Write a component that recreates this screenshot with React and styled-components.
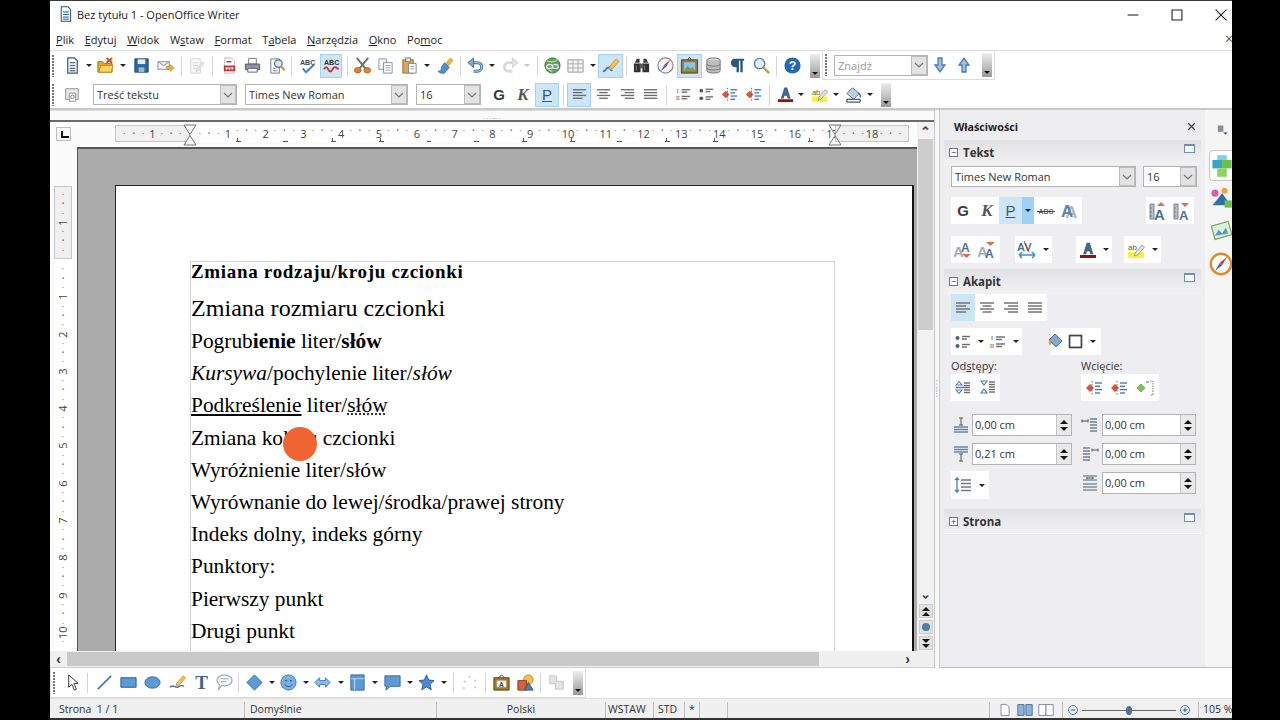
import React from 'react';
import styled, {createGlobalStyle} from 'styled-components';

const GlobalStyle = createGlobalStyle`
    html, body {
        margin: 0;
        padding: 0;
        background: #000;
    }
    * {
        box-sizing: border-box;
    }
`;

const uiFont = '"Open Sans", "Noto Sans", "Liberation Sans", sans-serif';

const lines = (rows, color = '#6b6b6b', w = 1.4) => rows.map(([x1, y, x2], i) => (
    <line key={i} x1={x1} y1={y} x2={x2} y2={y} stroke={color} strokeWidth={w} />
));

const ICONS = {
    doc: <><path d="M5 2h7l3 3v13H5z" fill="#fff" stroke="#40566e" strokeWidth="1.3" />{lines([[7, 7, 13], [7, 10, 13], [7, 13, 13], [7, 15.5, 13]], '#5c6f84')}</>,
    open: <><path d="M2 6h5l2 2h8v9H2z" fill="#e8a628" stroke="#a9741a" /><path d="M3 17l2-7h13l-2 7z" fill="#fbd168" stroke="#c08b22" /><path d="M11 2l6 5M17 2l-6 5" stroke="#d8482e" strokeWidth="2" /></>,
    save: <><path d="M3 3h14v14H3z" fill="#2d6aa3" stroke="#1c4468" /><path d="M6 3.5h8v5H6z" fill="#e9eef4" /><path d="M7 12h6v5H7z" fill="#9fb8d2" /></>,
    mail: <><path d="M2 6h12v8H2z" fill="#f3f3f3" stroke="#8b8f96" /><path d="M2 6l6 4 6-4" fill="none" stroke="#8b8f96" /><path d="M11 11h4V9l4 3.5-4 3.5v-2h-4z" fill="#eeb43c" stroke="#b07e1e" strokeWidth=".6" /></>,
    edit: <><path d="M4 3h10v15H4z" fill="#fbfbfb" stroke="#d3d3d3" />{lines([[6, 7, 12], [6, 10, 12], [6, 13, 11]], '#dadada')}<path d="M10 14l6-8 2 1.5-6 8-2.5 1z" fill="#e6e6e6" stroke="#cdcdcd" strokeWidth=".7" /></>,
    pdf: <><path d="M5 2h7l3 3v13H5z" fill="#fff" stroke="#b9b9b9" /><path d="M4 10h12v6H4z" fill="#c4342f" />{lines([[6, 13, 8], [9, 13, 11], [12, 13, 14]], '#fff', 2.4)}{lines([[7, 6, 12]], '#c4342f', 1.6)}</>,
    print: <><path d="M6 2.5h8v6H6z" fill="#fff" stroke="#70757c" /><path d="M2.5 8.5h15v6h-15z" fill="#8f949b" stroke="#54585e" /><path d="M5 13h10v4H5z" fill="#f4f4f4" stroke="#63676d" /></>,
    preview: <><path d="M4 3h9v15H4z" fill="#fff" stroke="#6f7a87" />{lines([[6, 13, 9], [6, 15.5, 11]], '#9aa3ad')}<circle cx="12" cy="8" r="4" fill="#d6e8f6" stroke="#53708c" strokeWidth="1.3" /><path d="M15 11l3.5 4" stroke="#c79a2c" strokeWidth="2.2" /></>,
    spell: <><text x="2" y="9" fontFamily="Liberation Sans" fontWeight="700" fontSize="7.5" fill="#444">ABC</text><path d="M5 13l3.5 4L17 9" fill="none" stroke="#3c87c9" strokeWidth="2.2" /></>,
    autospell: <><text x="2" y="9" fontFamily="Liberation Sans" fontWeight="700" fontSize="7.5" fill="#333">ABC</text><path d="M2 14c2-3 3-3 4.500 0s3 3 4.500 0 3-3 6.500 0" fill="none" stroke="#c9302a" strokeWidth="2" /></>,
    cut: <><path d="M4 2l9 11M16 2L7 13" stroke="#6f6f6f" strokeWidth="2" /><ellipse cx="5" cy="15" rx="3.500" ry="2.800" fill="#dd8432" stroke="#b9651c" /><ellipse cx="15" cy="15" rx="3.500" ry="2.800" fill="#dd8432" stroke="#b9651c" /></>,
    copy: <><path d="M3 3h8v11H3z" fill="#f2f5f9" stroke="#8b99aa" /><path d="M8 7h9v11H8z" fill="#fff" stroke="#7d8da0" />{lines([[10, 10, 15], [10, 12.5, 15], [10, 15, 15]], '#93a3b4', 1)}</>,
    paste: <><path d="M3 4h11v14H3z" fill="#dba94e" stroke="#97702a" /><path d="M6 2h5v4H6z" fill="#eee" stroke="#777" /><path d="M9 8h8v10H9z" fill="#fff" stroke="#75879b" />{lines([[11, 11, 15], [11, 13.5, 15]], '#8b9aa9', 1)}</>,
    brush: <><path d="M10 8l5-6 3 2.500-5 6z" fill="#f1b731" stroke="#b5841a" strokeWidth=".6" /><path d="M9 7l5 5-5 6c-2 1-5 0-7-2 3 0 4-2 4-5z" fill="#4a8fd2" stroke="#2c639c" strokeWidth=".7" /></>,
    undo: <><path d="M6 7h6a4 4 0 010 9H8" fill="none" stroke="#3f6f9f" strokeWidth="3.200" /><path d="M6 7h6a4 4 0 010 9H8" fill="none" stroke="#a6c6e4" strokeWidth="1.400" /><path d="M8 2L2 7l6 5z" fill="#7fa9d0" stroke="#3f6f9f" /></>,
    redo: <><path d="M14 7H8a4 4 0 000 9h4" fill="none" stroke="#d8d8d8" strokeWidth="3" /><path d="M12 2l6 5-6 5z" fill="#e6e6e6" stroke="#cfcfcf" /></>,
    globe: <><circle cx="10" cy="10" r="8" fill="#62a35b" stroke="#3f6f42" /><path d="M4 5c3 2 8 1 11-1M3 13c3-1 4 3 7 4" fill="none" stroke="#a8d49d" strokeWidth="1.500" /><rect x="4" y="9" width="6" height="4" rx="2" fill="none" stroke="#e9eef5" strokeWidth="1.300" /><rect x="10" y="9" width="6" height="4" rx="2" fill="none" stroke="#e9eef5" strokeWidth="1.300" /></>,
    table: <><path d="M2 4h16v13H2z" fill="#f3f3f3" stroke="#9b9b9b" /><path d="M2 8.300h16M2 12.600h16M7.300 4v13M12.600 4v13" stroke="#aaa" /></>,
    draw: <><path d="M2 16c3 1 3-4 6-4s1 4 4 3" fill="none" stroke="#3a78bd" strokeWidth="1.800" /><path d="M9 11l7-8 3 2.500-7 8-3.500 1z" fill="#f1c34e" stroke="#b48a22" strokeWidth=".7" /></>,
    find: <><path d="M3 7l2-4h3v4zM12 3h3l2 4h-5z" fill="#3b3b3b" /><path d="M2 8h7v9H2zM11 8h7v9h-7z" fill="#2f2f2f" /><path d="M8 8h4v5H8z" fill="#5c5c5c" /><path d="M4 10h1v5H4zM13 10h1v5h-1z" fill="#888" /></>,
    nav: <><circle cx="10" cy="10" r="8" fill="#f4f4f4" stroke="#8a8a8a" strokeWidth="1.300" /><path d="M15 4l-4 7-2-2z" fill="#cf3a33" /><path d="M5 16l4-7 2 2z" fill="#3b6fb0" /></>,
    gallery: <><path d="M1.500 4h17v14h-17z" fill="#a5762e" stroke="#5e3f12" /><path d="M4 6.500h12v9H4z" fill="#8ec2e8" /><path d="M4 15.500l4-5 3 3 2-2 3 4z" fill="#6e9e45" /><path d="M8 4l2-2.500L12 4" fill="none" stroke="#5e3f12" /></>,
    db: <><ellipse cx="10" cy="4.500" rx="7" ry="2.500" fill="#d6d6d6" stroke="#777" /><path d="M3 4.500v11c0 3.300 14 3.300 14 0v-11" fill="#bdbdbd" stroke="#777" /><path d="M3 8.500c0 3 14 3 14 0M3 12.500c0 3 14 3 14 0" fill="none" stroke="#777" /></>,
    pilcrow: <><path d="M6 3h11v2h-1.500v12h-2.500V5h-1.500v12H9v-5.500A4.300 4.300 0 016 3z" fill="#2a577f" /></>,
    zoom: <><circle cx="8" cy="8" r="5.500" fill="#deeefa" stroke="#62809c" strokeWidth="1.500" /><path d="M12 12l6 6" stroke="#c9a02f" strokeWidth="2.600" /></>,
    help: <><circle cx="10" cy="10" r="8.500" fill="#2467b6" /><text x="10" y="15" textAnchor="middle" fontFamily="Liberation Sans" fontWeight="700" fontSize="13" fill="#fff">?</text></>,
    down: <path d="M8 3h4v7h3l-5 7-5-7h3z" fill="#9cc1e2" stroke="#4b7dab" strokeWidth="1.300" />,
    up: <path d="M8 17h4v-7h3l-5-7-5 7h3z" fill="#9cc1e2" stroke="#4b7dab" strokeWidth="1.300" />,
    styles: <><path d="M3 3h14v12H3z" fill="#e7e7e7" stroke="#8f8f8f" /><path d="M7 8h7v9H7z" fill="#fff" stroke="#8f8f8f" /><circle cx="10.500" cy="12" r="2" fill="none" stroke="#6f6f6f" /></>,
    alignL: lines([[3, 5, 17], [3, 8, 13], [3, 11, 17], [3, 14, 13]]),
    alignC: lines([[3, 5, 17], [5.500, 8, 14.500], [3, 11, 17], [5.500, 14, 14.500]]),
    alignR: lines([[3, 5, 17], [7, 8, 17], [3, 11, 17], [7, 14, 17]]),
    alignJ: <>{lines([[3, 5, 17], [3, 8, 17], [3, 11, 17], [3, 14, 17]])}</>,
    numList: <><text x="3" y="8" fontFamily="Liberation Serif" fontSize="6" fill="#444">I</text><text x="2" y="16" fontFamily="Liberation Serif" fontSize="6" fill="#444">II</text>{lines([[8, 5, 17], [8, 7.500, 14], [8, 12, 17], [8, 14.500, 14]])}</>,
    bullets: <><circle cx="4.500" cy="6" r="2" fill="#4d5c6b" /><circle cx="4.500" cy="14" r="2" fill="#4d5c6b" />{lines([[9, 4.500, 17], [9, 7, 14], [9, 12.500, 17], [9, 15, 14]])}</>,
    indentL: <><path d="M2 10l4-4 4 4-4 4z" fill="#d9533d" /><path d="M8 3v14" stroke="#666" strokeDasharray="1.500 1.500" />{lines([[11, 5, 18], [11, 8.300, 16], [11, 11.600, 18], [11, 15, 16]], '#3f7fb5')}</>,
    indentG: <><path d="M2 10l4-4 4 4-4 4z" fill="#7bc257" stroke="#4f9030" strokeWidth=".6" />{lines([[11, 4, 14]], '#888')}<path d="M15 3h3v14h-3" fill="none" stroke="#777" strokeDasharray="1.500 1" /></>,
    fontColor: <><path d="M5.500 14L9 3h2.500L15 14h-2.500l-.8-3H8.700l-.8 3z" fill="#3e6b94" stroke="#27445f" strokeWidth=".5" /><path d="M2 15h16v3H2z" fill="#8f1010" /></>,
    highlight: <><path d="M2 12h16v6H2z" fill="#fff23a" /><text x="2" y="10" fontFamily="Liberation Sans" fontSize="8" fill="#6a5a1c">ab</text><path d="M9 13l7-8 2.500 2-7 8-3 1z" fill="#e6e6e6" stroke="#7d7d7d" strokeWidth=".7" /></>,
    paint: <><path d="M3 9l6-6 7 6-6 6z" fill="#b9d0e6" stroke="#5a6f85" /><path d="M3 15h14v3H3z" fill="#fff" stroke="#222" /><path d="M15 8c2 2 3 3 2 5" fill="none" stroke="#6f6f6f" strokeWidth="1.500" /></>,
    strike: <><text x="10" y="13" textAnchor="middle" fontFamily="Liberation Sans" fontWeight="700" fontSize="7" fill="#666">ABC</text><path d="M1 10.500h18" stroke="#444" /></>,
    shadow: <><text x="5" y="17" fontFamily="Liberation Sans" fontWeight="700" fontSize="17" fill="#a9b6c4">A</text><text x="1" y="16" fontFamily="Liberation Sans" fontWeight="700" fontSize="17" fill="#5f82a5">A</text></>,
    grow: <><path d="M2 3h4v15H2zM2 7h2M2 11h2M2 15h2" fill="#b7c2cc" stroke="#5f6d7a" strokeWidth=".8" /><text x="6" y="18.500" fontFamily="Liberation Sans" fontWeight="700" fontSize="15" fill="#4a7299">A</text><path d="M9 5l4-4 4 4z" fill="#dc7148" /></>,
    shrink: <><path d="M2 3h4v15H2zM2 7h2M2 11h2M2 15h2" fill="#b7c2cc" stroke="#5f6d7a" strokeWidth=".8" /><text x="7" y="18.500" fontFamily="Liberation Sans" fontWeight="700" fontSize="13" fill="#4a7299">A</text><path d="M9 2l4 4 4-4z" fill="#dc7148" /></>,
    above: <><text x="-1" y="17" fontFamily="Liberation Sans" fontWeight="700" fontSize="15" fill="#a5adb6">A</text><text x="7" y="12" fontFamily="Liberation Sans" fontWeight="700" fontSize="12" fill="#4a7299">A</text><path d="M8 14h9l-4.500 4z" fill="#dc7148" /></>,
    below: <><text x="-1" y="17" fontFamily="Liberation Sans" fontWeight="700" fontSize="15" fill="#a5adb6">A</text><text x="7" y="18" fontFamily="Liberation Sans" fontWeight="700" fontSize="12" fill="#4a7299">A</text><path d="M8 2h9l-4.500 4z" fill="#dc7148" /></>,
    kerning: <><text x="0" y="11" fontFamily="Liberation Sans" fontWeight="700" fontSize="11" fill="#4a6f95">AV</text><path d="M2 15h16M2 15l3-3M2 15l3 3M18 15l-3-3M18 15l-3 3" stroke="#3c8ed3" strokeWidth="1.500" fill="none" /><path d="M7 1l5 11" stroke="#c9302a" /></>,
    area: <><path d="M1 8l6-6 7 7-6 6z" fill="#7fa9cf" stroke="#526f8c" /><path d="M1 9c-1 2 0 4 1 4s2-2 0-5" fill="#e4a03a" /></>,
    borderBox: <rect x="3" y="3" width="14" height="14" fill="#fff" stroke="#444" strokeWidth="2" />,
    spaceMore: <><path d="M3 7l3-3.500L9 7zM3 12l3 3.500L9 12z" fill="#fff" stroke="#4a7fae" strokeWidth="1.100" />{lines([[11, 5, 17], [11, 7.500, 17], [3, 9.500, 17], [11, 12, 17], [11, 14.500, 17]])}</>,
    spaceLess: <><path d="M3 3h6L6 7zM3 15h6l-3-4z" fill="#fff" stroke="#4a7fae" strokeWidth="1.100" />{lines([[11, 4, 17], [11, 6.500, 17], [11, 9, 17], [11, 11.500, 17], [11, 14, 17]])}</>,
    above1: <>{lines([[3, 12, 17], [3, 14.500, 17], [3, 17, 17]], '#5b7fa3')}<path d="M10 3v7M8 3h4M8 10h4" stroke="#555" /></>,
    below1: <>{lines([[3, 3, 17], [3, 5.500, 17], [3, 8, 17]], '#5b7fa3')}<path d="M10 10v7M8 10h4M8 17h4" stroke="#555" /></>,
    indentBefore: <><path d="M2 6h6M2 4.500v3M8 4.500v3" stroke="#555" />{lines([[10, 4, 17], [10, 7, 17], [10, 10, 17], [10, 13, 17], [10, 16, 17]], '#7c8794', 1.600)}</>,
    indentAfter: <><path d="M12 6h6M12 4.500v3M18 4.500v3" stroke="#555" />{lines([[3, 4, 10], [3, 7, 10], [3, 10, 10], [3, 13, 10], [3, 16, 10]], '#7c8794', 1.600)}</>,
    firstLine: <>{lines([[3, 3, 17], [3, 7, 17], [3, 11, 17], [3, 14, 17], [3, 17, 17]], '#7c8794', 1.400)}<path d="M7 5h6M7 4v2M13 4v2" stroke="#555" /></>,
    spacing: <>{lines([[8, 5, 18], [8, 8.500, 18], [8, 12, 18], [8, 15.500, 18]], '#6f7a86', 1.500)}<path d="M4 3v14M2 5l2-2 2 2M2 15l2 2 2-2" stroke="#3c7fbd" fill="none" strokeWidth="1.300" /></>,
    cursor: <path d="M6 2v13l3.500-3 2.500 6 2-1-2.500-6H16z" fill="#fff" stroke="#333" />,
    line: <path d="M3 17L17 3" stroke="#3f76b5" strokeWidth="1.600" />,
    rect: <path d="M2 5h16v10H2z" fill="#5c9ad6" stroke="#24598f" />,
    ellipse: <ellipse cx="10" cy="10" rx="8" ry="6" fill="#5c9ad6" stroke="#2f6aa5" />,
    free: <><path d="M2 15c3-4 6 1 8 0s3-3 7-1" fill="none" stroke="#3f76b5" strokeWidth="1.500" /><path d="M9 11l7-8 2.500 2-7 8-3 1z" fill="#f1c34e" stroke="#b48a22" strokeWidth=".7" /></>,
    textT: <text x="10" y="17" textAnchor="middle" fontFamily="Liberation Serif" fontWeight="700" fontSize="20" fill="#3f6687">T</text>,
    note: <><path d="M2 8a8 6 0 1116 0 8 6 0 01-11 5l-3 4 .5-5A6 6 0 012 8z" fill="#fafafa" stroke="#a4abb3" strokeWidth="1.200" />{lines([[6, 6, 14], [6, 9, 12]], '#b0b9c2')}</>,
    diamond: <path d="M10 2l8 8-8 8-8-8z" fill="#5c9ad6" stroke="#2f6aa5" />,
    smile: <><circle cx="10" cy="10" r="8" fill="#79b0e4" stroke="#3f78b1" /><circle cx="7.500" cy="8" r="1" fill="#244f7b" /><circle cx="12.500" cy="8" r="1" fill="#244f7b" /><path d="M6 12c2 3 6 3 8 0" fill="none" stroke="#244f7b" /></>,
    dblArrow: <path d="M2 10l5-5v3h6V5l5 5-5 5v-3H7v3z" fill="#8fbce6" stroke="#3f78b1" />,
    flow: <><path d="M3 2h14v16H3z" fill="#5c9ad6" stroke="#2f6aa5" /><path d="M3 6h14M7 6v12" stroke="#bcd9f2" /></>,
    bubble: <path d="M2 3h16v11H8l-5 4 1-4H2z" fill="#5c9ad6" stroke="#2f6aa5" />,
    star: <path d="M10 2l2.400 5.400 5.600.6-4.200 3.900 1.200 5.800-5-3-5 3 1.200-5.800L2 8l5.600-.6z" fill="#4a8ad0" stroke="#2c5e95" />,
    points: <g fill="#c5cdd4"><rect x="4" y="8" width="2" height="2" /><rect x="9" y="3" width="2" height="2" /><rect x="15" y="7" width="2" height="2" /><rect x="3" y="15" width="2" height="2" /><rect x="15" y="14" width="2" height="2" /></g>,
    frameA: <><path d="M2 5h16v13H2z" fill="#a5762e" stroke="#5e3f12" /><path d="M5 8h10v7H5z" fill="#eef2f6" /><text x="10" y="14.500" textAnchor="middle" fontFamily="Liberation Sans" fontWeight="700" fontSize="7" fill="#345">A</text><path d="M7 5l3-3 3 3" fill="none" stroke="#5e3f12" /></>,
    cube3d: <><circle cx="13" cy="7" r="5" fill="#f2c24c" stroke="#c08d1f" /><path d="M2 8h9v10H2z" fill="#da5e36" stroke="#8d3a1e" /><path d="M9 18l4-8 5 8z" fill="#4b7fb5" stroke="#2c5680" /></>,
    extrude: <><path d="M3 3h7v6h7v8h-8v-6H3z" fill="#e5e5e5" stroke="#cfcfcf" strokeWidth="1.500" /></>,
    page1: <path d="M5 3h7l3 3v11H5z" fill="#fff" stroke="#707a85" />,
    page2: <><path d="M2 4h7v12H2z" fill="#8fb3d6" stroke="#3f6d99" /><path d="M11 4h7v12h-7z" fill="#8fb3d6" stroke="#3f6d99" /></>,
    book: <><path d="M2 4h8v12H2z" fill="#fff" stroke="#7a838d" /><path d="M10 4h8v12h-8z" fill="#fff" stroke="#7a838d" /></>,
    minus: <><circle cx="10" cy="10" r="6.500" fill="#e6eef6" stroke="#4d7092" strokeWidth="1.300" /><path d="M7 10h6" stroke="#35516c" strokeWidth="1.400" /></>,
    plus: <><circle cx="10" cy="10" r="6.500" fill="#e6eef6" stroke="#4d7092" strokeWidth="1.300" /><path d="M7 10h6M10 7v6" stroke="#35516c" strokeWidth="1.400" /></>,
    cubes: <><path d="M2 5h8v7H2z" fill="#38a6c9" /><path d="M10 5h8v7h-8z" fill="#6cc14b" /><path d="M6 12h8v7H6z" fill="#8ad65a" /><path d="M6 1h8v4H6z" fill="#7dd0e8" /></>,
    styleTab: <><path d="M3 16L11 6l7 10z" fill="#2f6fa8" /><circle cx="5" cy="6" r="3" fill="#d961a8" /><circle cx="13" cy="4" r="2.500" fill="#f0a33a" /><path d="M13 12h6v6h-6z" fill="#6fbf4b" /></>,
    galleryTab: <><path d="M2 6l14-4 3 11-14 4z" fill="#dff0d8" stroke="#7aa65f" /><path d="M5 14l3-5 3 3 3-5 2 5z" fill="#4f9ad4" /></>,
    navTab: <><circle cx="10" cy="10" r="8.500" fill="#fff" stroke="#e08c2a" strokeWidth="2" /><path d="M15 4l-4 7-2-2z" fill="#cf3a33" /><path d="M5 16l4-7 2 2z" fill="#3b6fb0" /></>,
    writer: <><path d="M5 1h8l3 3v14H5z" fill="#fff" stroke="#34506c" strokeWidth="1.200" />{lines([[7, 7, 14], [7, 10, 14], [7, 13, 14], [7, 15.500, 14]], '#2c6ba5', 1.300)}</>,
    minimize: <path d="M4 10h12" stroke="#222" strokeWidth="1.200" />,
    maximize: <path d="M4.500 4.500h11v11h-11z" fill="none" stroke="#222" strokeWidth="1.200" />,
    close: <path d="M4 4l12 12M16 4L4 16" stroke="#222" strokeWidth="1.200" />,
    panelClose: <path d="M5 5l10 10M15 5L5 15" stroke="#444" strokeWidth="2" />,
    menuSmall: <><path d="M4 5h8v9H4z" fill="#8a8f96" /><path d="M12 15h6l-3 3z" fill="#333" /></>,
};

const IconSvg = styled.svg`
    flex-shrink: 0;
`;

const Icon = ({n, s = 20}) => (
    <IconSvg width={s} height={s} viewBox="0 0 20 20">{ICONS[n]}</IconSvg>
);

const HourGlass = ({open}) => (
    <svg width="14" height="22" viewBox="0 0 14 22">
        <path d="M1 1h12L7 10.500zM1 21h12L7 11.500z" fill={open ? 'none' : '#f7f7f7'} stroke="#777" />
    </svg>
);

const standardBar = [
    ['doc', 28], ['dd', 6], ['open', 26], ['dd', 10], ['save', 26], ['mail', 22], ['sep', 10], ['edit', 20], ['sep', 12],
    ['pdf', 22], ['print', 24], ['preview', 24], ['sep', 6], ['spell', 26], ['autospell', 22, true], ['sep', 10],
    ['cut', 20], ['copy', 26], ['paste', 22], ['dd', 14], ['brush', 22], ['sep', 8], ['undo', 22], ['dd', 12],
    ['redo', 24], ['dd', 10, false, 0, true], ['sep', 10], ['globe', 20], ['table', 26], ['dd', 10], ['draw', 25, true], ['sep', 6],
    ['find', 24], ['nav', 24], ['gallery', 25, true], ['db', 22], ['pilcrow', 26], ['zoom', 22], ['sep', 8], ['help', 24],
];

const listBar = [
    ['alignL', 24, true], ['alignC', 24], ['alignR', 24], ['alignJ', 22], ['sep', 10], ['numList', 24], ['bullets', 22],
    ['indentL', 24], ['indentL', 24], ['sep', 8], ['fontColor', 24], ['dd', 8], ['highlight', 28], ['dd', 6], ['paint', 28], ['dd', 6],
];

const drawBar = [
    ['cursor', 26], ['sep', 4], ['line', 30], ['rect', 18], ['ellipse', 30], ['free', 20], ['textT', 28], ['note', 18], ['sep', 10],
    ['diamond', 22], ['dd', 14], ['smile', 18], ['dd', 8, false, 5], ['dblArrow', 20, false, 2], ['dd', 8, false, 5],
    ['flow', 20, false, 2], ['dd', 8, false, 4], ['bubble', 20, false, 3], ['dd', 8, false, 4], ['star', 20, false, 2],
    ['dd', 8, false, 4], ['sep', 10], ['points', 22], ['sep', 10], ['frameA', 22], ['cube3d', 26], ['sep', 4], ['extrude', 28],
];

const renderTools = (items) => items.map(([name, w, active, gap, muted], i) => {
    if (name === 'sep') return <Sep key={i} $w={w} />;
    if (name === 'dd') return <DropSlot key={i} $w={w} $gap={gap}><Drop $muted={muted} /></DropSlot>;
    return <Tool key={i} $w={w} $active={active} $gap={gap}><Icon n={name} s={19} /></Tool>;
});

const DocumentText = () => (
    <TextFrame>
        <HeadLine>Zmiana rodzaju/kroju czcionki</HeadLine>
        <BigLine>Zmiana rozmiaru czcionki</BigLine>
        <BodyLine>Pogrub<b>ienie</b> liter/<b>słów</b></BodyLine>
        <BodyLine><i>Kursywa</i>/pochylenie liter/<i>słów</i></BodyLine>
        <BodyLine><u>Podkreślenie</u> liter/<SpellWord>słów</SpellWord></BodyLine>
        <BodyLine>Zmiana koloru czcionki</BodyLine>
        <BodyLine>Wyróżnienie liter/słów</BodyLine>
        <BodyLine>Wyrównanie do lewej/środka/prawej strony</BodyLine>
        <BodyLine>Indeks dolny, indeks górny</BodyLine>
        <BodyLine>Punktory:</BodyLine>
        <BodyLine>Pierwszy punkt</BodyLine>
        <BodyLine>Drugi punkt</BodyLine>
    </TextFrame>
);

const Dots = ({count}) => Array.from({length: count}, (_, i) => <RulerDot key={i} $big={i === 1}>·</RulerDot>);

export default function App() {
    return (
        <Screen>
            <GlobalStyle />
            <Window>
                <TitleBar>
                    <Icon n="writer" s={17} />
                    <TitleText>Bez tytułu 1 - OpenOffice Writer</TitleText>
                    <WinButton><Icon n="minimize" s={18} /></WinButton>
                    <WinButton><Icon n="maximize" s={18} /></WinButton>
                    <WinButton><Icon n="close" s={18} /></WinButton>
                </TitleBar>

                <MenuBar>
                    <MenuItem><Key>P</Key>lik</MenuItem>
                    <MenuItem><Key>E</Key>dytuj</MenuItem>
                    <MenuItem><Key>W</Key>idok</MenuItem>
                    <MenuItem>W<Key>s</Key>taw</MenuItem>
                    <MenuItem><Key>F</Key>ormat</MenuItem>
                    <MenuItem>T<Key>a</Key>bela</MenuItem>
                    <MenuItem><Key>N</Key>arzędzia</MenuItem>
                    <MenuItem><Key>O</Key>kno</MenuItem>
                    <MenuItem>Po<Key>m</Key>oc</MenuItem>
                    <MenuClose>×</MenuClose>
                </MenuBar>

                <ToolRow>
                    <ToolBar>
                        <Handle />
                        {renderTools(standardBar)}
                        <Overflow />
                    </ToolBar>
                    <ToolBar $boxed>
                        <Handle />
                        <Combo $w={94} $muted $gap={3}>Znajdź</Combo>
                        <Tool $w={24}><Icon n="down" /></Tool>
                        <Tool $w={24}><Icon n="up" /></Tool>
                        <Overflow />
                    </ToolBar>
                </ToolRow>

                <ToolRow $last>
                    <ToolBar>
                        <Handle />
                        <Tool $w={28}><Icon n="styles" s={18} /></Tool>
                        <Combo $w={144} $gap={7}>Treść tekstu</Combo>
                        <Combo $w={163} $gap={8}>Times New Roman</Combo>
                        <Combo $w={65} $gap={8}>16</Combo>
                        <Tool $w={24} $gap={6}><LetterG>G</LetterG></Tool>
                        <Tool $w={24}><LetterK>K</LetterK></Tool>
                        <Tool $w={24} $active><LetterP>P</LetterP></Tool>
                        <Sep $w={8} />
                        {renderTools(listBar)}
                        <Overflow $gap={8} />
                    </ToolBar>
                </ToolRow>

                <Workspace>
                    <EditorPane>
                        <DockStrip><DockDots>· · ····· ·</DockDots></DockStrip>
                        <EditArea>
                            <DocColumn>
                                <RulerRow>
                                    <CornerSlot><TabCorner /></CornerSlot>
                                    <Ruler>
                                        <RulerMargin $w={75}>
                                            <Dots count={3} /><RulerNum>1</RulerNum><Dots count={3} />
                                        </RulerMargin>
                                        <RulerBody>
                                            <RulerLead><Dots count={3} /></RulerLead>
                                            {Array.from({length: 17}, (_, i) => (
                                                <RulerCell key={i}><RulerNum>{i + 1}</RulerNum><Dots count={3} /></RulerCell>
                                            ))}
                                        </RulerBody>
                                        <RulerMargin $w={74}>
                                            <Dots count={3} /><RulerNum>18</RulerNum><Dots count={3} />
                                        </RulerMargin>
                                        <Indent $x={75}><HourGlass /></Indent>
                                        <Indent $x={720}><HourGlass open /></Indent>
                                    </Ruler>
                                </RulerRow>
                                <DocBody>
                                    <VRulerCol>
                                        <VMargin>
                                            <Dots count={3} /><VNum>1</VNum><Dots count={3} />
                                        </VMargin>
                                        <VLead><Dots count={3} /></VLead>
                                        {Array.from({length: 10}, (_, i) => (
                                            <VCell key={i}><VNum>{i + 1}</VNum><Dots count={i === 9 ? 1 : 3} /></VCell>
                                        ))}
                                    </VRulerCol>
                                    <Canvas>
                                        <Page><DocumentText /></Page>
                                        <ClickDot />
                                    </Canvas>
                                </DocBody>
                            </DocColumn>
                            <VScroll>
                                <ScrollArrow>⌃</ScrollArrow>
                                <VThumb />
                                <ScrollArrow $down>⌃</ScrollArrow>
                                <NavButtons>
                                    <NavButton><Triangle /><Triangle /></NavButton>
                                    <NavButton><NavDot /></NavButton>
                                    <NavButton><Triangle $down /><Triangle $down /></NavButton>
                                </NavButtons>
                            </VScroll>
                        </EditArea>
                        <HScroll>
                            <HArrow>‹</HArrow>
                            <HThumb />
                            <HArrow>›</HArrow>
                        </HScroll>
                    </EditorPane>

                    <SplitHandle><SplitDots>· · ····· ·</SplitDots></SplitHandle>

                    <Sidebar>
                        <DeckTitle>
                            <span>Właściwości</span>
                            <Icon n="panelClose" s={13} />
                        </DeckTitle>

                        <SectionHead><Toggle>−</Toggle>Tekst<MoreBox /></SectionHead>
                        <SideRow $top={1}>
                            <Combo $w={185}>Times New Roman</Combo>
                            <Combo $w={54} $gap={7}>16</Combo>
                        </SideRow>
                        <SideRow $top={10} $between>
                            <ToolBox>
                                <SideTool $w={24}><LetterG>G</LetterG></SideTool>
                                <SideTool $w={24}><LetterK>K</LetterK></SideTool>
                                <SideTool $w={23} $active><LetterP>P</LetterP></SideTool>
                                <SideTool $w={12} $strong><Drop /></SideTool>
                                <SideTool $w={24}><Icon n="strike" /></SideTool>
                                <SideTool $w={24}><Icon n="shadow" /></SideTool>
                            </ToolBox>
                            <ToolBox>
                                <SideTool $w={24}><Icon n="grow" /></SideTool>
                                <SideTool $w={24}><Icon n="shrink" /></SideTool>
                            </ToolBox>
                        </SideRow>
                        <SideRow $top={12}>
                            <ToolBox>
                                <SideTool $w={25}><Icon n="above" /></SideTool>
                                <SideTool $w={24}><Icon n="below" /></SideTool>
                            </ToolBox>
                            <ToolBox $gap={15}>
                                <SideTool $w={24}><Icon n="kerning" /></SideTool>
                                <SideTool $w={13}><Drop /></SideTool>
                            </ToolBox>
                            <ToolBox $gap={24}>
                                <SideTool $w={24}><Icon n="fontColor" /></SideTool>
                                <SideTool $w={12}><Drop /></SideTool>
                            </ToolBox>
                            <ToolBox $gap={12}>
                                <SideTool $w={24}><Icon n="highlight" /></SideTool>
                                <SideTool $w={13}><Drop /></SideTool>
                            </ToolBox>
                        </SideRow>

                        <SectionHead $top={6}><Toggle>−</Toggle>Akapit<MoreBox /></SectionHead>
                        <SideRow>
                            <ToolBox>
                                <SideTool $w={24} $active><Icon n="alignL" /></SideTool>
                                <SideTool $w={24}><Icon n="alignC" /></SideTool>
                                <SideTool $w={24}><Icon n="alignR" /></SideTool>
                                <SideTool $w={24}><Icon n="alignJ" /></SideTool>
                            </ToolBox>
                        </SideRow>
                        <SideRow $top={7}>
                            <ToolBox>
                                <SideTool $w={24}><Icon n="bullets" /></SideTool>
                                <SideTool $w={12}><Drop /></SideTool>
                                <SideTool $w={22}><Icon n="numList" /></SideTool>
                                <SideTool $w={13}><Drop /></SideTool>
                            </ToolBox>
                            <ToolBox $gap={29}>
                                <SideTool $w={14}><Icon n="area" /></SideTool>
                                <SideTool $w={20}><Icon n="borderBox" s={17} /></SideTool>
                                <SideTool $w={16}><Drop /></SideTool>
                            </ToolBox>
                        </SideRow>
                        <SpaceGrid>
                            <SideLabel>Od<Key>s</Key>tępy:</SideLabel>
                            <SideLabel>Wcięcie:</SideLabel>
                            <ToolBox>
                                <SideTool $w={24}><Icon n="spaceMore" /></SideTool>
                                <SideTool $w={25}><Icon n="spaceLess" /></SideTool>
                            </ToolBox>
                            <ToolBox>
                                <SideTool $w={26}><Icon n="indentL" /></SideTool>
                                <SideTool $w={24}><Icon n="indentL" /></SideTool>
                                <SideTool $w={28}><Icon n="indentG" /></SideTool>
                            </ToolBox>
                        </SpaceGrid>
                        <SpinGrid>
                            <SpinField><Icon n="above1" /><Spin $w={100}>0,00 cm</Spin></SpinField>
                            <SpinField $right><Icon n="indentBefore" /><Spin $w={94}>0,00 cm</Spin></SpinField>
                            <SpinField><Icon n="below1" /><Spin $w={100}>0,21 cm</Spin></SpinField>
                            <SpinField $right><Icon n="indentAfter" /><Spin $w={94}>0,00 cm</Spin></SpinField>
                            <SpacingBox>
                                <SideTool $w={24}><Icon n="spacing" /></SideTool>
                                <SideTool $w={14}><Drop /></SideTool>
                            </SpacingBox>
                            <SpinField $right><Icon n="firstLine" /><Spin $w={94}>0,00 cm</Spin></SpinField>
                        </SpinGrid>

                        <SectionHead $top={15} $closed><Toggle>+</Toggle>Strona<MoreBox /></SectionHead>
                    </Sidebar>

                    <TabBar>
                        <TabMenu><Icon n="menuSmall" s={14} /></TabMenu>
                        <TabSlot $active><Icon n="cubes" s={24} /></TabSlot>
                        <TabSlot><Icon n="styleTab" s={24} /></TabSlot>
                        <TabSlot><Icon n="galleryTab" s={24} /></TabSlot>
                        <TabSlot><Icon n="navTab" s={24} /></TabSlot>
                    </TabBar>
                </Workspace>

                <DrawRow>
                    <ToolBar $boxed>
                        <Handle />
                        {renderTools(drawBar)}
                        <Overflow $gap={3} />
                    </ToolBar>
                </DrawRow>

                <StatusBar>
                    <StatusCell $w={195} $pad={9}>Strona&nbsp; 1 / 1</StatusCell>
                    <StatusCell $w={192} $pad={5}>Domyślnie</StatusCell>
                    <StatusCell $w={169} $center>Polski</StatusCell>
                    <StatusCell $w={48} $pad={2}>WSTAW</StatusCell>
                    <StatusCell $w={31} $pad={4}>STD</StatusCell>
                    <StatusCell $w={15} $center>*</StatusCell>
                    <StatusCell $w={28} />
                    <StatusCell $w={262} />
                    <ViewCell $w={73}>
                        <Icon n="page1" s={16} /><Icon n="page2" s={18} /><Icon n="book" s={18} />
                    </ViewCell>
                    <ZoomCell>
                        <Icon n="minus" s={14} />
                        <ZoomTrack><ZoomThumb /></ZoomTrack>
                        <Icon n="plus" s={14} />
                    </ZoomCell>
                    <StatusCell $w={40} $pad={4}>105 %</StatusCell>
                </StatusBar>
            </Window>
        </Screen>
    );
}

const Screen = styled.div`
    width: 1280px;
    height: 720px;
    background: #000;
    overflow: hidden;
    padding-left: 50px;
`;

const Window = styled.div`
    width: 1182px;
    height: 720px;
    display: flex;
    flex-direction: column;
    background: #fff;
    border-top: 1px solid #3a3a3a;
    border-bottom: 2px solid #333;
    overflow: hidden;
    font-family: ${uiFont};
    color: #222;
`;

const TitleBar = styled.div`
    height: 27px;
    flex-shrink: 0;
    display: flex;
    align-items: center;
    padding-left: 7px;
`;

const TitleText = styled.div`
    font-size: 11px;
    margin-left: 3px;
    flex: 1;
`;

const WinButton = styled.div`
    width: 44px;
    display: flex;
    justify-content: center;
    &:last-child {
        margin-right: -11px;
    }
`;

const MenuBar = styled.div`
    height: 23px;
    flex-shrink: 0;
    display: flex;
    align-items: center;
    gap: 10.7px;
    padding-left: 6px;
    font-size: 11px;
    border-bottom: 1px solid #dcdcdc;
    position: relative;
`;

const MenuItem = styled.span``;

const Key = styled.span`
    text-decoration: underline;
`;

const MenuClose = styled.span`
    position: absolute;
    right: -1px;
    top: 1px;
    font-size: 14px;
    color: #555;
`;

const ToolRow = styled.div`
    height: ${p => (p.$last ? 29 : 30)}px;
    flex-shrink: 0;
    display: flex;
    align-items: stretch;
    padding-bottom: ${p => (p.$last ? 0 : 1)}px;
    border-bottom: ${p => (p.$last ? '2px solid #c8c8c8' : 'none')};
`;

const ToolBar = styled.div`
    display: flex;
    align-items: center;
    padding-right: 2px;
    background: #fff;
    ${p => p.$boxed && 'border-left: 1px solid #e0e0e0; border-right: 1px solid #dcdcdc; border-bottom: 1px solid #dcdcdc;'}
`;

const Handle = styled.div`
    width: 8px;
    height: 22px;
    flex-shrink: 0;
    background: radial-gradient(circle at 3px 1px, #777 0.8px, transparent 1px) 0 0 / 8px 3px repeat-y;
`;

const Tool = styled.div`
    width: ${p => p.$w}px;
    height: 24px;
    margin-left: ${p => p.$gap || 0}px;
    flex-shrink: 0;
    display: flex;
    align-items: center;
    justify-content: center;
    background: ${p => (p.$active ? '#cde6f7' : 'transparent')};
    box-shadow: ${p => (p.$active ? 'inset 0 0 0 1px #a3d2f2' : 'none')};
`;

const Sep = styled.div`
    width: ${p => p.$w}px;
    height: 20px;
    flex-shrink: 0;
    background: linear-gradient(#d5d5d5, #d5d5d5) center / 1px 100% no-repeat;
`;

const DropSlot = styled.div`
    width: ${p => p.$w}px;
    height: 24px;
    margin-left: ${p => p.$gap || 0}px;
    flex-shrink: 0;
    display: flex;
    align-items: center;
    justify-content: center;
`;

const Drop = styled.div`
    flex-shrink: 0;
    border-left: 3px solid transparent;
    border-right: 3px solid transparent;
    border-top: 3px solid ${p => (p.$muted ? '#c4c4c4' : '#222')};
`;

const Overflow = styled.div`
    width: 10px;
    height: 24px;
    margin-left: ${p => p.$gap ?? 6}px;
    flex-shrink: 0;
    background: linear-gradient(#eeeeee, #999);
    position: relative;
    &::after {
        content: '';
        position: absolute;
        left: 2px;
        bottom: 3px;
        border-left: 3px solid transparent;
        border-right: 3px solid transparent;
        border-top: 3px solid #111;
    }
`;

const ComboText = styled.div`
    flex: 1;
    padding-left: 3px;
    line-height: 19px;
    white-space: nowrap;
    overflow: hidden;
`;

const ComboArrow = styled.div`
    width: 16px;
    flex-shrink: 0;
    display: flex;
    align-items: center;
    justify-content: center;
    background: #e3e3e3;
    border: 1px solid #bdbdbd;
`;

const Combo = styled(({children, className}) => (
    <div className={className}>
        <ComboText>{children}</ComboText>
        <ComboArrow>
            <svg width="10" height="6" viewBox="0 0 10 6"><path d="M1 1l4 4 4-4" fill="none" stroke="#777" strokeWidth="1.200" /></svg>
        </ComboArrow>
    </div>
))`
    width: ${p => p.$w}px;
    height: 21px;
    margin-left: ${p => p.$gap || 0}px;
    flex-shrink: 0;
    display: flex;
    background: #fff;
    border: 1px solid #b4b4b4;
    color: ${p => (p.$muted ? '#9a9a9a' : '#333')};
    font-size: 11px;
`;

const LetterG = styled.span`
    font: 700 15px "Liberation Sans", sans-serif;
    color: #3a3a3a;
`;

const LetterK = styled.span`
    font: italic 700 17px "Liberation Serif", serif;
    color: #555;
`;

const LetterP = styled.span`
    font: 400 15px "Liberation Sans", sans-serif;
    color: #38587a;
    text-decoration: underline;
`;

const Workspace = styled.div`
    flex: 1;
    min-height: 0;
    overflow: hidden;
    display: flex;
    background: #f5f5f5;
`;

const EditorPane = styled.div`
    width: 884px;
    flex-shrink: 0;
    display: flex;
    flex-direction: column;
    border-bottom: 1px solid #cfcfcf;
`;

const DockStrip = styled.div`
    height: 12px;
    flex-shrink: 0;
    background: #fafafa;
    border-top: 1px solid #dedede;
    border-bottom: 2px solid #6b6b6b;
    text-align: center;
    line-height: 7px;
`;

const DockDots = styled.span`
    font-size: 6px;
    color: #555;
`;

const EditArea = styled.div`
    flex: 1;
    min-height: 0;
    display: flex;
`;

const DocColumn = styled.div`
    width: 867px;
    flex-shrink: 0;
    display: flex;
    flex-direction: column;
`;

const RulerRow = styled.div`
    height: 25px;
    flex-shrink: 0;
    display: flex;
    align-items: flex-start;
    padding-top: 3px;
    background: #fbfbfb;
`;

const CornerSlot = styled.div`
    width: 65px;
    flex-shrink: 0;
    padding-left: 6px;
    padding-top: 2px;
`;

const TabCorner = styled.div`
    width: 15px;
    height: 14px;
    background: #f8f8f8;
    border: 1px solid #bdbdbd;
    position: relative;
    &::after {
        content: '';
        position: absolute;
        left: 4px;
        top: 3px;
        width: 6px;
        height: 5px;
        border-left: 2px solid #111;
        border-bottom: 2px solid #111;
    }
`;

const Ruler = styled.div`
    width: 794px;
    height: 17px;
    flex-shrink: 0;
    display: flex;
    position: relative;
    font-size: 11px;
    color: #444;
`;

const RulerMargin = styled.div`
    width: ${p => p.$w}px;
    flex-shrink: 0;
    display: flex;
    justify-content: center;
    align-items: center;
    background: #f0f0f0;
    border: 1px solid #c6c6c6;
`;

const RulerBody = styled.div`
    width: 645px;
    flex-shrink: 0;
    display: flex;
    align-items: center;
    background:
        repeating-linear-gradient(90deg, transparent 0 47px, #555 47px 47.7px) 0 100% / 100% 4px no-repeat,
        repeating-linear-gradient(90deg, transparent 0 42.7px, #555 42.7px 47.7px) 2.5px 100% / 100% 1px no-repeat,
        #fff;
`;

const RulerLead = styled.div`
    width: 33.1px;
    flex-shrink: 0;
    display: flex;
    justify-content: flex-end;
`;

const RulerCell = styled.div`
    width: 37.8px;
    flex-shrink: 0;
    display: flex;
`;

const RulerDot = styled.span`
    width: 9.3px;
    height: 9.3px;
    flex-shrink: 0;
    text-align: center;
    line-height: 9.3px;
    font-size: ${p => (p.$big ? 12 : 9)}px;
    color: #666;
`;

const RulerNum = styled.span`
    width: 9.45px;
    flex-shrink: 0;
    display: flex;
    justify-content: center;
    line-height: 15px;
`;

const Indent = styled.div`
    position: absolute;
    left: ${p => p.$x - 7}px;
    top: -1px;
    height: 22px;
`;

const DocBody = styled.div`
    flex: 1;
    min-height: 0;
    display: flex;
`;

const VRulerCol = styled.div`
    width: 27px;
    flex-shrink: 0;
    display: flex;
    flex-direction: column;
    padding: 39px 0 0 4px;
    overflow: hidden;
    background: #fbfbfb;
    font-size: 11px;
    color: #444;
`;

const VMargin = styled.div`
    width: 18px;
    height: 73px;
    flex-shrink: 0;
    display: flex;
    flex-direction: column;
    align-items: center;
    justify-content: center;
    background: #f0f0f0;
    border: 1px solid #c6c6c6;
`;

const VLead = styled.div`
    width: 18px;
    height: 33.3px;
    flex-shrink: 0;
    display: flex;
    flex-direction: column;
    align-items: center;
    justify-content: flex-end;
    background: #fff;
`;

const VCell = styled.div`
    width: 18px;
    height: 37.3px;
    flex-shrink: 0;
    display: flex;
    flex-direction: column;
    align-items: center;
    background: #fff;
`;

const VNum = styled.span`
    height: 9.3px;
    line-height: 9.3px;
    width: 14px;
    text-align: center;
    flex-shrink: 0;
    display: block;
    transform: rotate(-90deg);
`;

const Canvas = styled.div`
    width: 840px;
    flex-shrink: 0;
    background: #ababab;
    border-top: 2px solid #555;
    border-left: 1px solid #555;
    padding: 36px 0 0 37px;
    overflow: hidden;
    position: relative;
`;

const Page = styled.div`
    width: 799px;
    min-height: 600px;
    background: #fff;
    border-top: 1px solid #222;
    border-left: 1px solid #222;
    border-right: 2px solid #111;
    padding: 75px 0 0 74px;
`;

const TextFrame = styled.div`
    width: 645px;
    min-height: 500px;
    border: 1px solid #d3d3d3;
    border-bottom: none;
    font-family: "Liberation Serif", "Times New Roman", serif;
    color: #000;
`;

const HeadLine = styled.div`
    font-weight: 700;
    font-size: 19px;
    letter-spacing: 0.68px;
    line-height: 20px;
`;

const BigLine = styled.div`
    font-size: 24.1px;
    line-height: 26px;
    margin-top: 13px;
`;

const BodyLine = styled.div`
    font-size: 21.4px;
    line-height: 32.2px;
    white-space: nowrap;
    &:nth-child(3) {
        margin-top: 4px;
    }
`;

const SpellWord = styled.span`
    text-decoration: underline dotted #333 1.5px;
`;

const ClickDot = styled.div`
    position: absolute;
    left: 205px;
    top: 278px;
    width: 34px;
    height: 34px;
    border-radius: 50%;
    background: #ef6431;
`;

const VScroll = styled.div`
    width: 17px;
    flex-shrink: 0;
    display: flex;
    flex-direction: column;
    align-items: center;
    background: #f2f2f2;
`;

const ScrollArrow = styled.div`
    height: 17px;
    flex-shrink: 0;
    font: 700 13px "Liberation Sans", sans-serif;
    line-height: 20px;
    color: #444;
    transform: ${p => (p.$down ? 'rotate(180deg)' : 'none')};
`;

const VThumb = styled.div`
    width: 15px;
    height: 191px;
    flex-shrink: 0;
    margin-bottom: auto;
    background: #cdcdcd;
`;

const NavButtons = styled.div`
    display: flex;
    flex-direction: column;
    gap: 2px;
    padding-bottom: 1px;
    margin-top: 1px;
`;

const NavButton = styled.div`
    width: 14px;
    height: 14px;
    display: flex;
    flex-direction: column;
    align-items: center;
    justify-content: center;
    gap: 1px;
    background: #e2e2e2;
    border: 1px solid #cdcdcd;
`;

const Triangle = styled.div`
    border-left: 4px solid transparent;
    border-right: 4px solid transparent;
    ${p => (p.$down ? 'border-top: 4px solid #111;' : 'border-bottom: 4px solid #111;')}
`;

const NavDot = styled.div`
    width: 8px;
    height: 8px;
    border-radius: 50%;
    background: #4f7da8;
`;

const HScroll = styled.div`
    height: 16px;
    flex-shrink: 0;
    display: flex;
    align-items: center;
    background: #f0f0f0;
`;

const HArrow = styled.div`
    width: 17px;
    flex-shrink: 0;
    text-align: center;
    font: 700 14px "Liberation Sans", sans-serif;
    line-height: 14px;
    color: #333;
    &:last-child {
        margin-left: 80px;
    }
`;

const HThumb = styled.div`
    width: 752px;
    height: 14px;
    flex-shrink: 0;
    background: #c9c9c9;
`;

const SplitHandle = styled.div`
    width: 6px;
    flex-shrink: 0;
    display: flex;
    align-items: center;
    background: #f7f7f7;
    border-left: 1px solid #c8c8c8;
    border-right: 1px solid #c8c8c8;
`;

const SplitDots = styled.span`
    writing-mode: vertical-rl;
    font-size: 6px;
    color: #555;
    margin-left: -2px;
`;

const Sidebar = styled.div`
    width: 265px;
    flex-shrink: 0;
    background: #eeedf0;
    padding: 3px 4px 0;
    display: flex;
    flex-direction: column;
    font-size: 11px;
    border-bottom: 1px solid #bdbdbd;
`;

const DeckTitle = styled.div`
    height: 27px;
    flex-shrink: 0;
    display: flex;
    align-items: center;
    justify-content: space-between;
    padding: 0 3px 0 10px;
    font-weight: 700;
    font-size: 10.7px;
    color: #222;
`;

const SectionHead = styled.div`
    height: 25px;
    flex-shrink: 0;
    margin-top: ${p => p.$top || 0}px;
    display: flex;
    align-items: center;
    padding: 0 6px 0 5px;
    font-weight: 700;
    font-size: 11.5px;
    color: #333;
    background: linear-gradient(#e1e1e3, #f2f1f4);
    border-bottom: ${p => (p.$closed ? '1px solid #fff' : 'none')};
`;

const Toggle = styled.span`
    width: 9px;
    height: 9px;
    margin-right: 5px;
    flex-shrink: 0;
    display: flex;
    align-items: center;
    justify-content: center;
    border: 1px solid #777;
    background: #fff;
    font-size: 9px;
    line-height: 1;
    font-weight: 400;
`;

const MoreBox = styled.span`
    width: 11px;
    height: 9px;
    margin: -8px 0 0 auto;
    flex-shrink: 0;
    border: 1px solid #6d8fb0;
    border-top-width: 2px;
    background: #f7fafc;
`;

const SideRow = styled.div`
    display: flex;
    flex-shrink: 0;
    margin-top: ${p => p.$top || 0}px;
    padding: 0 7px;
    justify-content: ${p => (p.$between ? 'space-between' : 'flex-start')};
`;

const ToolBox = styled.div`
    display: flex;
    flex-shrink: 0;
    width: fit-content;
    height: 27px;
    margin-left: ${p => p.$gap || 0}px;
    background: #fff;
`;

const SideTool = styled.div`
    width: ${p => p.$w}px;
    flex-shrink: 0;
    display: flex;
    align-items: center;
    justify-content: center;
    background: ${p => (p.$strong ? '#9fd0f5' : p.$active ? '#cde6f7' : 'transparent')};
`;

const SpaceGrid = styled.div`
    display: grid;
    grid-template-columns: 130px 120px;
    margin-top: 4px;
    padding-left: 7px;
    flex-shrink: 0;
`;

const SideLabel = styled.div`
    height: 15px;
    line-height: 14px;
    font-size: 11px;
    color: #333;
`;

const SpinGrid = styled.div`
    display: grid;
    grid-template-columns: 129px 116px;
    grid-auto-rows: 22px;
    row-gap: 7px;
    margin-top: 13px;
    padding-left: 7px;
    flex-shrink: 0;
`;

const SpinField = styled.div`
    display: flex;
    align-items: center;
    gap: ${p => (p.$right ? 2 : 1)}px;
`;

const SpinText = styled.div`
    flex: 1;
    padding-left: 2px;
    line-height: 20px;
    color: #333;
`;

const SpinButtons = styled.div`
    width: 15px;
    flex-shrink: 0;
    display: flex;
    flex-direction: column;
    align-items: center;
    justify-content: center;
    gap: 3px;
    background: #e9e9e9;
    border-left: 1px solid #c4c4c4;
`;

const Spin = styled(({children, className}) => (
    <div className={className}>
        <SpinText>{children}</SpinText>
        <SpinButtons><Triangle /><Triangle $down /></SpinButtons>
    </div>
))`
    width: ${p => p.$w}px;
    height: 22px;
    flex-shrink: 0;
    display: flex;
    background: #fff;
    border: 1px solid #b4b4b4;
    font-size: 11px;
`;

const SpacingBox = styled(ToolBox)`
    height: 28px;
    margin-top: -1px;
`;

const TabBar = styled.div`
    flex: 1;
    display: flex;
    flex-direction: column;
    background: #f5f5f5;
    padding-top: 9px;
    border-bottom: 1px solid #bdbdbd;
`;

const TabMenu = styled.div`
    height: 31px;
    padding-left: 10px;
`;

const TabSlot = styled.div`
    height: 33px;
    width: 34px;
    padding: 3px 0 0 4px;
    ${p => p.$active && `
        margin-left: 4px;
        padding-left: 0;
        height: 31px;
        background: #fff;
        border: 1px solid #c8c8c8;
        border-radius: 4px 0 0 4px;
        margin-bottom: 2px;
    `}
`;

const DrawRow = styled.div`
    height: 30px;
    flex-shrink: 0;
    display: flex;
    align-items: stretch;
`;

const StatusBar = styled.div`
    height: 20px;
    flex-shrink: 0;
    display: flex;
    align-items: center;
    padding-top: 3px;
    background: #f0f0f0;
    border-top: 1px solid #e0e0e0;
    font-size: 10.5px;
    color: #333;
`;

const StatusCell = styled.div`
    width: ${p => p.$w}px;
    height: 16px;
    flex-shrink: 0;
    padding-left: ${p => p.$pad || 0}px;
    text-align: ${p => (p.$center ? 'center' : 'left')};
    line-height: 15px;
    white-space: nowrap;
    border-right: 1px solid #bdbdbd;
    &:last-child {
        border-right: none;
    }
`;

const ViewCell = styled(StatusCell)`
    display: flex;
    align-items: center;
    justify-content: space-around;
    padding: 0 6px;
`;

const ZoomCell = styled.div`
    width: 136px;
    height: 16px;
    flex-shrink: 0;
    display: flex;
    align-items: center;
    padding: 0 6px 0 3px;
    border-right: 1px solid #bdbdbd;
`;

const ZoomTrack = styled.div`
    flex: 1;
    height: 1px;
    margin: 0 2px;
    background: #666;
    display: flex;
    justify-content: center;
    align-items: center;
`;

const ZoomThumb = styled.div`
    width: 6px;
    height: 9px;
    border-radius: 50%;
    background: #4d7092;
    flex-shrink: 0;
`;
